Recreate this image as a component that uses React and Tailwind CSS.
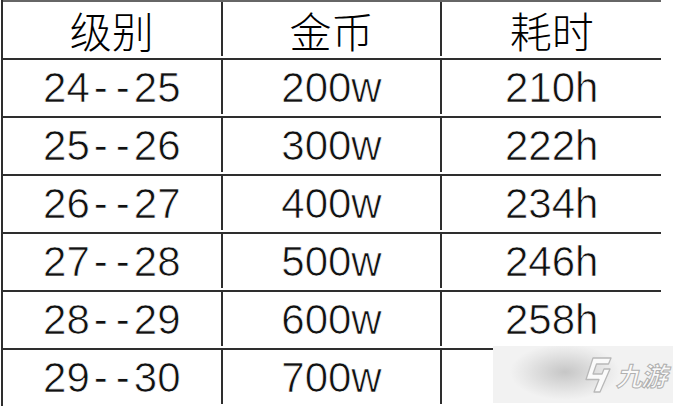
const rows = [
  ['24--25', '200w', '210h'],
  ['25--26', '300w', '222h'],
  ['26--27', '400w', '234h'],
  ['27--28', '500w', '246h'],
  ['28--29', '600w', '258h'],
  ['29--30', '700w', ''],
];

// hyphens in the source are spaced wider than the font's own advance
function Num({ text }) {
  const parts = text.split('-');
  return (
    <>
      {parts.map((p, i) => (
        <span key={i}>
          {i > 0 && <span className="mx-[4px]">-</span>}
          {p}
        </span>
      ))}
    </>
  );
}

function Cell({ children, last, cjk }) {
  return (
    <div
      className={
        'flex items-center justify-center h-full ' +
        (last ? 'w-[219px] ' : 'w-[220px] border-r-2 border-[#2e2e2e] ') +
        (cjk
          ? "text-[42px] text-black font-['Noto_Sans_CJK_SC',sans-serif] font-light"
          : "text-[42px] font-['Liberation_Sans',Arial,sans-serif] [-webkit-text-stroke:0.7px_#fff]")
      }
    >
      {children}
    </div>
  );
}

export default function App() {
  return (
    <div className="relative w-[673px] h-[406px] overflow-hidden bg-white text-[#111]">
      <div className="ml-[1px] w-[660px] border-l-2 border-[#2e2e2e]">
        <div className="flex h-[58px] border-t-2 border-[#666] pb-[2px]">
          <Cell cjk>级别</Cell>
          <Cell cjk>金币</Cell>
          <Cell cjk last>耗时</Cell>
        </div>
        {rows.map((r, i) => (
          <div key={i} className="flex h-[58px] border-t-2 border-[#2e2e2e] pb-[2px]">
            <Cell><Num text={r[0]} /></Cell>
            <Cell>{r[1]}</Cell>
            <Cell last>{r[2]}</Cell>
          </div>
        ))}
      </div>

      {/* watermark */}
      <div className="absolute left-[493px] top-[346px] w-[180px] h-[57px] bg-[radial-gradient(ellipse_55px_28px_at_72px_26px,#c6c6c6,#e8e8e8_75%,#f2f2f2)]">
        <div className="absolute left-[90px] top-[11px] flex items-center gap-[3px] whitespace-nowrap">
          <svg className="shrink-0" width="30" height="36" viewBox="0 0 30 36" fill="#fafafa" stroke="#b8b8b8" strokeWidth="1.3" strokeLinejoin="round">
            <path d="M10 1 L28 1 L25.5 7 L13.5 7 L10 17 L19 17 L21 12 L27 12 L17 35 L11 35 L16 22.5 L3 22.5 Z" />
          </svg>
          <span className="text-[26px] italic leading-none text-[#fafafa] [-webkit-text-stroke:1px_#b0b0b0] font-['Noto_Sans_CJK_SC',sans-serif] font-bold tracking-[-1px]">
            九游
          </span>
        </div>
      </div>
    </div>
  );
}
